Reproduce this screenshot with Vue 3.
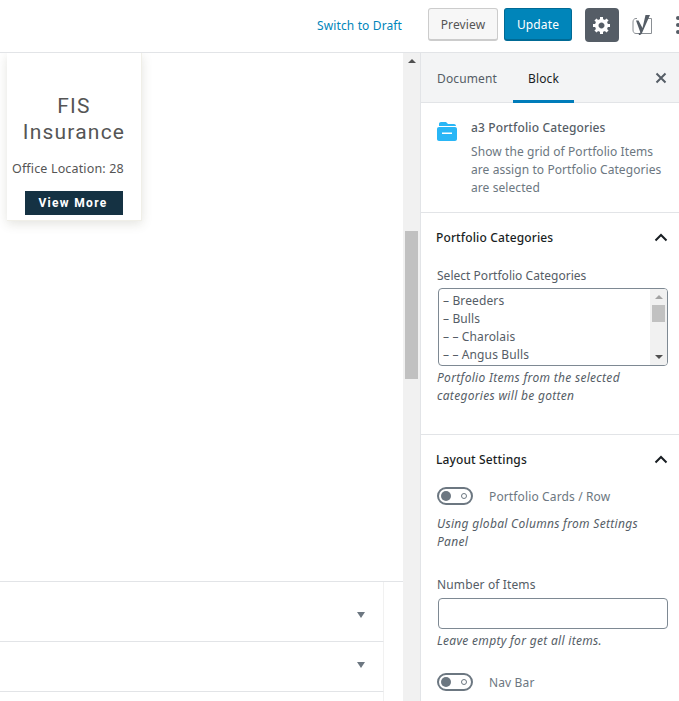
<template>
  <div class="editor">
    <header class="topbar">
      <a class="switch-link">Switch to Draft</a>
      <button class="btn btn-preview">Preview</button>
      <button class="btn btn-update">Update</button>
      <button class="settings-btn">
        <svg width="20" height="20" viewBox="0 0 20 20">
          <path fill="#fff" d="M18 12h-2.180c-.17.7-.44 1.350-.81 1.930l1.540 1.540-2.100 2.100-1.540-1.540c-.58.36-1.230.63-1.910.79V19H8v-2.180c-.68-.16-1.330-.43-1.910-.79l-1.540 1.540-2.120-2.120 1.540-1.540c-.36-.58-.63-1.230-.79-1.910H1V9.030h2.170c.16-.7.44-1.350.8-1.940L2.430 5.550l2.100-2.100 1.540 1.540c.58-.37 1.240-.64 1.930-.81V2h3v2.180c.68.16 1.330.43 1.910.79l1.540-1.540 2.120 2.120-1.540 1.540c.36.59.64 1.240.8 1.940H18V12zm-8.500 1.500c1.660 0 3-1.340 3-3s-1.340-3-3-3-3 1.340-3 3 1.340 3 3 3z"/>
        </svg>
      </button>
      <svg class="yoast" width="22" height="24" viewBox="0 0 22 24">
        <path fill="none" stroke="#8a8f94" stroke-width="1" d="M6 5.500H5C3 5.500 2 7 2 9v8c0 2 1 3.500 3 3.500h15.500V5.500H17"/>
        <path fill="#555d66" d="M14.500 2h4.500L11 20c-.7 1.500-1.500 2-3 2l-.5-1.500c1-.2 1.500-.5 1.800-1.200L5 7.500h2.500l4 7.500z"/>
      </svg>
      <div class="kebab"><i></i><i></i><i></i></div>
    </header>

    <div class="workspace">
      <main class="content">
        <article class="card">
          <h3 class="card-title">FIS Insurance</h3>
          <p class="card-office">Office Location: 28</p>
          <a class="card-more">View More</a>
        </article>

        <section class="meta-boxes">
          <div v-for="n in 2" :key="n" class="meta-row"><span class="down-arrow"></span></div>
          <div class="meta-row meta-last"></div>
        </section>
      </main>

      <div class="page-scroll">
        <span class="up-arrow"></span>
        <div class="page-thumb"></div>
      </div>

      <aside class="sidebar">
        <div class="tabs">
          <span class="tab">Document</span>
          <span class="tab tab-active">Block</span>
          <svg class="close" width="12" height="12" viewBox="0 0 12 12">
            <path d="M1.500 1.500l9 9M10.500 1.500l-9 9" stroke="#555d66" stroke-width="2" fill="none"/>
          </svg>
        </div>

        <div class="block-card">
          <svg class="block-icon" width="21" height="20" viewBox="0 0 21 20">
            <path fill="#29b6f6" d="M2 3c0-1.100.9-2 2-2h5l2 2h6c1.100 0 2 .9 2 2H2z"/>
            <path fill="#29b6f6" d="M0 8c0-1.100.9-2 2-2h16c1.100 0 2 .9 2 2v10c0 1.100-.9 2-2 2H2c-1.100 0-2-.9-2-2z"/>
            <rect x="5" y="11.500" width="10" height="1.500" fill="#fff"/>
          </svg>
          <div>
            <div class="block-name">a3 Portfolio Categories</div>
            <div class="block-desc">Show the grid of Portfolio Items are assign to Portfolio Categories are selected</div>
          </div>
        </div>

        <section class="panel panel-cats">
          <div class="panel-head">
            <span>Portfolio Categories</span>
            <svg width="14" height="9" viewBox="0 0 14 9"><path d="M1.500 7.500L7 2l5.500 5.500" fill="none" stroke="#191e23" stroke-width="2"/></svg>
          </div>
          <label class="field-label field-select">Select Portfolio Categories</label>
          <div class="listbox">
            <ul class="options">
              <li v-for="c in categories" :key="c">{{ c }}</li>
            </ul>
            <div class="list-scroll">
              <span class="mini-up"></span>
              <div class="list-thumb"></div>
              <span class="mini-down"></span>
            </div>
          </div>
          <p class="help">Portfolio Items from the selected categories will be gotten</p>
        </section>

        <section class="panel panel-layout">
          <div class="panel-head">
            <span>Layout Settings</span>
            <svg width="14" height="9" viewBox="0 0 14 9"><path d="M1.500 7.500L7 2l5.500 5.500" fill="none" stroke="#191e23" stroke-width="2"/></svg>
          </div>
          <div class="toggle-row">
            <span class="toggle"><i class="knob"></i><i class="dot"></i></span>
            <span>Portfolio Cards / Row</span>
          </div>
          <p class="help help-toggle">Using global Columns from Settings Panel</p>
          <label class="field-label field-number">Number of Items</label>
          <input class="text-input" type="text" />
          <p class="help help-input">Leave empty for get all items.</p>
          <div class="toggle-row toggle-nav">
            <span class="toggle"><i class="knob"></i><i class="dot"></i></span>
            <span>Nav Bar</span>
          </div>
        </section>
      </aside>
    </div>
  </div>
</template>

<script setup>
const categories = ['– Breeders', '– Bulls', '– – Charolais', '– – Angus Bulls']
</script>

<style>
html, body {
  margin: 0;
  overflow: hidden;
  background: #fff;
}
</style>

<style scoped>
.editor {
  width: 679px;
  height: 701px;
  display: flex;
  flex-direction: column;
  overflow: hidden;
  font-family: "Noto Sans", sans-serif;
  font-size: 12px;
  letter-spacing: 0.13px;
  color: #555d66;
}

/* top bar */
.topbar {
  flex: none;
  height: 52px;
  border-bottom: 1px solid #e2e4e7;
  display: flex;
  align-items: center;
  padding-left: 317px;
}
.switch-link {
  color: #0085ba;
  font-size: 12px;
  letter-spacing: 0.13px;
  width: 111px;
  flex: none;
  margin-top: -2px;
}
.btn {
  height: 33px;
  flex: none;
  box-sizing: border-box;
  border-radius: 3px;
  font-family: inherit;
  font-size: 12px;
  letter-spacing: 0.13px;
  padding: 0;
  margin-top: -3px;
}
.btn-preview {
  width: 70px;
  margin-right: 6px;
  background: #f7f7f7;
  border: 1px solid #ccc;
  border-bottom-width: 2px;
  color: #555;
}
.btn-update {
  width: 68px;
  margin-right: 13px;
  background: #0085ba;
  border: 1px solid #006a95;
  border-bottom-width: 2px;
  color: #fff;
}
.settings-btn {
  width: 34px;
  height: 34px;
  flex: none;
  padding: 0;
  border: 0;
  border-radius: 4px;
  background: #555d66;
  display: flex;
  align-items: center;
  justify-content: center;
  margin-top: -2px;
}
.yoast {
  flex: none;
  margin: -3px 0 0 12px;
}
.kebab {
  margin: -3px 0 0 23px;
  display: flex;
  flex-direction: column;
  gap: 3px;
  flex: none;
}
.kebab i {
  display: block;
  width: 4px;
  height: 4px;
  border-radius: 50%;
  background: #555d66;
}

.workspace {
  flex: 1;
  min-height: 0;
  display: flex;
}

/* left content */
.content {
  width: 403px;
  flex: none;
  display: flex;
  flex-direction: column;
  overflow: hidden;
}
.card {
  width: 135px;
  height: 168px;
  flex: none;
  box-sizing: border-box;
  margin-left: 7px;
  padding-top: 40px;
  background: #fff;
  box-shadow: 0 3px 10px rgba(90, 85, 60, 0.16);
  border-right: 1px solid #f0efe8;
  border-bottom: 1px solid #f0efe8;
  text-align: center;
}
.card-title {
  margin: 0;
  padding: 0 6px;
  font-family: Roboto, sans-serif;
  font-size: 21px;
  font-weight: 400;
  line-height: 26px;
  letter-spacing: 1.200px;
  color: #555;
}
.card-office {
  margin: 15px 0 0;
  padding-left: 5px;
  text-align: left;
  font-size: 12.500px;
  line-height: 18px;
  letter-spacing: 0.15px;
  color: #555;
  white-space: nowrap;
}
.card-more {
  display: block;
  width: 98px;
  height: 24px;
  box-sizing: border-box;
  padding-right: 2px;
  margin: 13px 0 0 18px;
  background: #153243;
  color: #fff;
  font-family: Roboto, sans-serif;
  font-size: 12px;
  font-weight: 700;
  line-height: 24px;
  letter-spacing: 1.300px;
}
.meta-boxes {
  margin-top: auto;
  height: 119px;
  flex: none;
  border-top: 1px solid #e2e4e7;
}
.meta-row {
  width: 383px;
  border-right: 1px solid #f1f1f1;
  border-bottom: 1px solid #e2e4e7;
  display: flex;
  align-items: flex-start;
  justify-content: flex-end;
  padding-top: 20px;
  height: 29px;
}
.meta-row:first-child {
  padding-top: 30px;
}
.meta-last {
  border-bottom: 0;
  height: 10px;
  padding-top: 0;
}
.down-arrow {
  width: 0;
  height: 0;
  margin-right: 18px;
  border-left: 4.500px solid transparent;
  border-right: 4.500px solid transparent;
  border-top: 6px solid #6c7781;
}

/* page scrollbar */
.page-scroll {
  width: 17px;
  flex: none;
  background: #f1f1f1;
  display: flex;
  flex-direction: column;
  align-items: center;
  padding-top: 6px;
  box-sizing: border-box;
}
.up-arrow {
  width: 0;
  height: 0;
  border-left: 4px solid transparent;
  border-right: 4px solid transparent;
  border-bottom: 4px solid #505050;
}
.page-thumb {
  width: 13px;
  height: 148px;
  margin-top: 168px;
  background: #c1c1c1;
}

/* sidebar */
.sidebar {
  flex: none;
  width: 259px;
  box-sizing: border-box;
  border-left: 1px solid #e2e4e7;
  overflow: hidden;
}
.tabs {
  height: 49px;
  border-bottom: 1px solid #e2e4e7;
  background: #f3f4f5;
  display: flex;
  align-items: stretch;
}
.tab {
  display: flex;
  align-items: center;
  justify-content: center;
  height: 49px;
  box-sizing: border-box;
  padding-top: 2px;
  color: #555d66;
  font-size: 12px;
}
.tab:first-child {
  width: 92px;
}
.tab-active {
  width: 61px;
  border-bottom: 3px solid #007cba;
  height: 50px;
  padding-top: 3px;
  color: #191e23;
}
.close {
  margin: 19px 0 0 81px;
}
.block-card {
  height: 110px;
  box-sizing: border-box;
  border-bottom: 1px solid #e2e4e7;
  padding: 16px 8px 0 16px;
  display: flex;
  gap: 13px;
}
.block-icon {
  flex: none;
  margin-top: 2px;
}
.block-name {
  font-weight: 500;
  font-size: 12px;
  line-height: 18px;
  color: #555d66;
  margin-bottom: 6px;
}
.block-desc {
  font-size: 12px;
  line-height: 18px;
  letter-spacing: 0.08px;
  color: #6c7781;
}
.panel {
  padding: 0 11px 0 15px;
  border-bottom: 1px solid #e2e4e7;
}
.panel-cats {
  height: 222px;
  box-sizing: border-box;
}
.panel-layout {
  height: 300px;
}
.panel-head {
  height: 49px;
  display: flex;
  align-items: center;
  justify-content: space-between;
  color: #191e23;
  font-weight: 500;
  font-size: 12px;
}
.field-label {
  display: block;
  line-height: 18px;
  margin: 5px 0 0 1px;
  color: #555d66;
}
.field-select {
  letter-spacing: 0.02px;
}
.listbox {
  width: 230px;
  height: 78px;
  box-sizing: border-box;
  margin: 3px 0 0 2px;
  border: 1px solid #7e8993;
  border-radius: 4px;
  display: flex;
  overflow: hidden;
}
.options {
  flex: 1;
  margin: 0;
  padding: 3px 0 0 4px;
  list-style: none;
  color: #555d66;
}
.options li {
  line-height: 18px;
}
.list-scroll {
  width: 17px;
  background: #f1f1f1;
  display: flex;
  flex-direction: column;
  align-items: center;
  padding-top: 6px;
  box-sizing: border-box;
}
.mini-up, .mini-down {
  width: 0;
  height: 0;
  border-left: 4px solid transparent;
  border-right: 4px solid transparent;
}
.mini-up {
  border-bottom: 4px solid #a3a3a3;
}
.mini-down {
  border-top: 4px solid #505050;
  margin-top: auto;
  margin-bottom: 6px;
}
.list-thumb {
  width: 13px;
  height: 17px;
  margin-top: 6px;
  background: #c1c1c1;
}
.help {
  margin: 3px 0 0 1px;
  max-width: 225px;
  font-style: italic;
  font-size: 12px;
  line-height: 18px;
  letter-spacing: 0.3px;
  color: #555d66;
}
.toggle-row {
  display: flex;
  align-items: center;
  gap: 16px;
  height: 18px;
  margin-top: 3px;
  margin-left: 1px;
  color: #6c7781;
}
.toggle {
  width: 36px;
  height: 18px;
  box-sizing: border-box;
  border: 2px solid #6c7781;
  border-radius: 9px;
  display: flex;
  align-items: center;
  justify-content: space-between;
  padding: 0 4px 0 2px;
  flex: none;
}
.knob {
  width: 10px;
  height: 10px;
  border-radius: 50%;
  background: #6c7781;
}
.dot {
  width: 6px;
  height: 6px;
  box-sizing: border-box;
  border: 1px solid #6c7781;
  border-radius: 50%;
}
.help-toggle {
  margin-top: 10px;
}
.field-number {
  margin-top: 25px;
}
.text-input {
  display: block;
  width: 230px;
  height: 31px;
  box-sizing: border-box;
  margin: 4px 0 0 2px;
  border: 1px solid #7e8993;
  border-radius: 4px;
  background: #fff;
}
.help-input {
  margin-top: 3px;
}
.toggle-nav {
  margin-top: 23px;
}
</style>
